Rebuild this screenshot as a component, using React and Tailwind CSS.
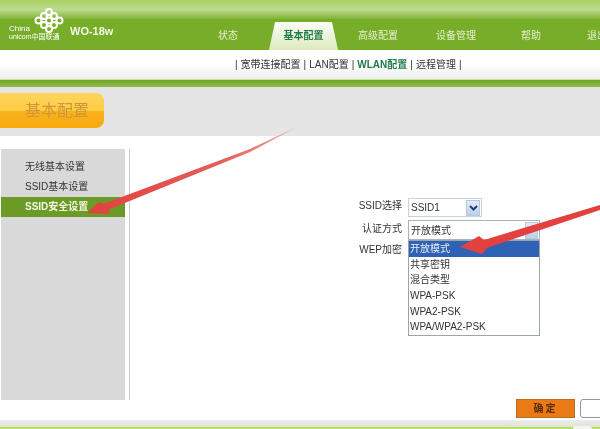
const FONT = { fontFamily: '"Liberation Sans", "Noto Sans CJK SC", sans-serif' }

const TABS = [
    { label: '状态', w: 'w-[82px]' },
    { label: '基本配置', active: true },
    { label: '高级配置', w: 'w-[80px]' },
    { label: '设备管理', w: 'w-[76px]' },
    { label: '帮助', w: 'w-[74px]' },
    { label: '退出', w: 'w-[58px]' },
]
const OPTIONS = ['开放模式', '共享密钥', '混合类型', 'WPA-PSK', 'WPA2-PSK', 'WPA/WPA2-PSK']

function Logo() {
    return (
        <svg width="30" height="25" viewBox="0 0 30 25" fill="none" stroke="#fff" strokeWidth="2" className="absolute left-[34px] top-[8px]">
            <circle cx="15" cy="4" r="3" />
            <circle cx="10" cy="8" r="3" />
            <circle cx="20" cy="8" r="3" />
            <circle cx="4.5" cy="12.5" r="3" />
            <circle cx="15" cy="12.5" r="3" />
            <circle cx="25.5" cy="12.5" r="3" />
            <circle cx="10" cy="17" r="3" />
            <circle cx="20" cy="17" r="3" />
            <circle cx="15" cy="21" r="3" />
        </svg>
    )
}

function Chevron({ className }) {
    return (
        <span className={`flex items-center justify-center bg-gradient-to-b from-[#e4edf9] to-[#bcd0ea] border border-[#b9c9dd] ${className}`}>
            <svg width="9" height="6" viewBox="0 0 9 6" fill="none" stroke="#1f3f78" strokeWidth="2"><path d="M1 1l3.5 3.5L8 1" /></svg>
        </span>
    )
}

function Arrows() {
    return (
        <svg width="600" height="429" viewBox="0 0 600 429" className="absolute left-0 top-0 pointer-events-none">
            <defs>
                <linearGradient id="fade" x1="296" y1="127" x2="87" y2="213" gradientUnits="userSpaceOnUse">
                    <stop offset="0" stopColor="#eba8a4" />
                    <stop offset="0.35" stopColor="#e2605c" />
                    <stop offset="1" stopColor="#e2403e" />
                </linearGradient>
            </defs>
            <path d="M87 213 L99 202 L103 204 L250 149 L297 127 L250 152 L110 209 L108 214 Z" fill="url(#fade)" />
            <path d="M600 205 L484 240 L479 236 L460 247 L482 254 L487 248 L600 210 Z" fill="#e2413f" />
        </svg>
    )
}

export default function App() {
    return (
        <div style={FONT} className="relative w-[600px] h-[429px] overflow-hidden bg-white blur-[0.4px]">
            {/* top green header */}
            <div className="relative h-[50px] bg-[#78ad29]">
                <div className="h-[19px] bg-gradient-to-b from-[#a8d060] via-[#bcdb8c] to-[#80b434]" />
                <Logo />
                <span className="absolute left-[9px] top-[25px] text-[8px] leading-[8px] text-white">China</span>
                <span className="absolute left-[9px] top-[33px] text-[7px] leading-[7px] text-white whitespace-nowrap">unicom中国联通</span>
                <span className="absolute left-[70px] top-[25px] text-[11px] leading-[12px] font-bold text-[#f4f8e8]">WO-18w</span>
                <nav className="absolute left-[187px] top-[22px] flex h-[28px] items-stretch">
                    {TABS.map(t => t.active ? (
                        <span key={t.label} className="w-[69px] flex items-center justify-center pb-[2px] bg-gradient-to-b from-[#fbfdf5] to-[#dcebc0] text-[10px] font-bold text-[#1f7a4a] [clip-path:polygon(6px_0,calc(100%-6px)_0,100%_100%,0_100%)]">
                            {t.label}
                        </span>
                    ) : (
                        <span key={t.label} className={`${t.w} flex items-center justify-center pb-[2px] text-[10px] text-[#e3efcd] whitespace-nowrap`}>{t.label}</span>
                    ))}
                </nav>
            </div>

            {/* sub nav */}
            <div className="h-[29px] bg-gradient-to-b from-white via-white to-[#eeeeee] flex items-center gap-[3px] pl-[235px] text-[10px] text-[#333] whitespace-nowrap">
                <span>|</span>
                <span>宽带连接配置</span>
                <span>|</span>
                <span>LAN配置</span>
                <span>|</span>
                <span className="font-bold text-[#1f7a4a]">WLAN配置</span>
                <span>|</span>
                <span>远程管理</span>
                <span>|</span>
            </div>
            <div className="h-[8px] border-t border-[#cfe39a] bg-gradient-to-b from-[#6fa525] to-[#8fbb4a]" />

            {/* section title band */}
            <div className="h-[49px] bg-[#e5e5e5] pt-[6px]">
                <div className="w-[104px] h-[35px] rounded-r-lg bg-[linear-gradient(#fed65a_0%,#fdcb45_52%,#f9b21c_52%,#f8a90e_100%)] flex items-center pl-[25px] text-[16px] text-[#d0963a]">
                    基本配置
                </div>
            </div>

            {/* body */}
            <div className="flex pt-[13px] h-[284px]">
                <aside className="ml-[1px] w-[124px] h-[251px] bg-[#d9d9d9] pt-[8px] text-[10px] text-[#333]">
                    <div className="h-[20px] pl-[24px] pb-[2px] flex items-center">无线基本设置</div>
                    <div className="h-[20px] pl-[24px] pb-[2px] flex items-center">SSID基本设置</div>
                    <div className="h-[20px] pl-[24px] pb-[2px] flex items-center bg-[#6b9a26] font-bold text-[#f2f6df]">SSID安全设置</div>
                </aside>
                <div className="ml-[4px] w-[1px] h-[251px] bg-[#cccccc]" />

                <div className="relative flex-1">
                    <div className="pt-[49px] pl-[228px] flex flex-col text-[10px] text-[#333]">
                        <div className="flex items-center h-[19px]">
                            <span className="w-[44px] text-right -translate-y-[2px] whitespace-nowrap">SSID选择</span>
                            <span className="ml-[6px] w-[74px] h-[19px] flex items-center justify-between border border-[#c9d3df] pl-[2px] pr-[1px]">
                                SSID1
                                <Chevron className="w-[14px] h-[16px]" />
                            </span>
                        </div>
                        <div className="flex items-center h-[20px] mt-[3px]">
                            <span className="w-[44px] text-right -translate-y-[2px] whitespace-nowrap">认证方式</span>
                            <span className="ml-[6px] w-[132px] h-[20px] flex items-center justify-between border border-[#a8b4c2] pl-[2px] pr-[1px]">
                                开放模式
                                <Chevron className="w-[13px] h-[17px]" />
                            </span>
                        </div>
                        <div className="flex">
                            <span className="w-[44px] text-right mt-[2px] whitespace-nowrap">WEP加密</span>
                            <ul className="ml-[6px] w-[132px] h-[96px] border border-[#9aa5b2] bg-white">
                                {OPTIONS.map((o, i) => (
                                    <li key={o} className={`h-[15.7px] leading-[15.7px] pl-[1px] ${i === 0 ? 'bg-[#2f62b5] text-[#e8eef8]' : ''}`}>{o}</li>
                                ))}
                            </ul>
                        </div>
                    </div>
                    <div className="absolute left-[386px] top-[250px] flex gap-[5px]">
                        <button className="w-[59px] h-[19px] bg-[#ea7a16] border border-[#b7701f] text-[10px] font-bold text-[#5b2c0a] tracking-[2px]">确定</button>
                        <button className="w-[59px] h-[19px] bg-white border border-[#8a9aa8] rounded-[3px] text-[10px] text-[#333]">取消</button>
                    </div>
                </div>
            </div>

            {/* footer */}
            <div className="h-[7px] bg-gradient-to-b from-[#ececec] to-[#dfe3d8]" />
            <div className="h-[2px] bg-[#b9e25a]" />
            <div className="absolute left-[573px] top-[426px] w-[19px] h-[3px] rounded-t-md bg-[#f4f6ee]" />

            <Arrows />
        </div>
    )
}
